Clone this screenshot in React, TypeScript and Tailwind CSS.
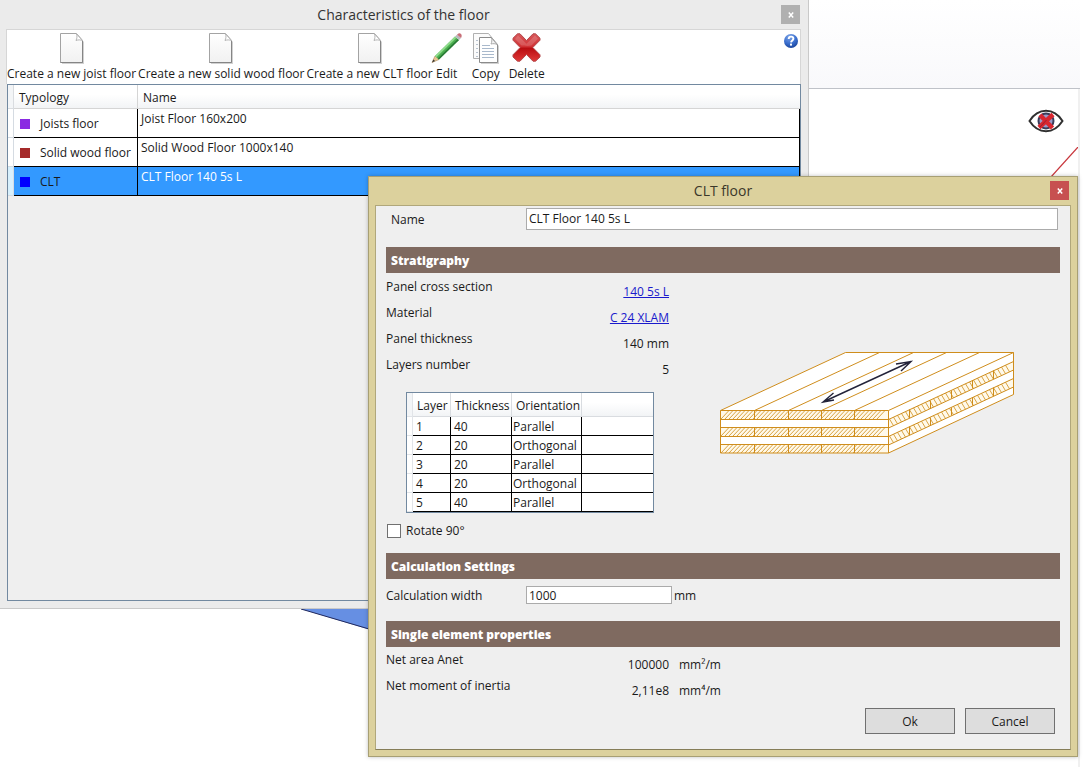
import React, { useState } from 'react';

interface FloorRow {
    typology: string;
    name: string;
    color: string;
}

const floors: FloorRow[] = [
    { typology: 'Joists floor', name: 'Joist Floor 160x200', color: 'bg-[#8a2be2]' },
    { typology: 'Solid wood floor', name: 'Solid Wood Floor 1000x140', color: 'bg-[#a52a2a]' },
    { typology: 'CLT', name: 'CLT Floor 140 5s L', color: 'bg-[#0000ff]' },
];

const layers = [
    { id: 1, thickness: 40, orientation: 'Parallel' },
    { id: 2, thickness: 20, orientation: 'Orthogonal' },
    { id: 3, thickness: 20, orientation: 'Parallel' },
    { id: 4, thickness: 20, orientation: 'Orthogonal' },
    { id: 5, thickness: 40, orientation: 'Parallel' },
];

const FileIcon = () => (
    <svg width="26" height="32" viewBox="0 0 26 32">
        <defs>
            <linearGradient id="paper" x1="0" y1="0" x2="0" y2="1">
                <stop offset="0" stopColor="#fff" />
                <stop offset="1" stopColor="#f1f1f1" />
            </linearGradient>
        </defs>
        <path d="M3 2h16l6 7v22H3z" fill="#000" opacity=".18" />
        <path d="M1.5.5h16l6 7v22h-22z" fill="url(#paper)" stroke="#a3a3a3" />
        <path d="M23.5 8v21.500h-22" fill="none" stroke="#858585" />
        <path d="M17.500 1c.8 2 .5 4.500-.5 6.500 2-.8 4.500-.8 6.500 0z" fill="#fff" stroke="#b5b5b5" />
    </svg>
);

const PencilIcon = () => (
    <svg width="32" height="32" viewBox="0 0 32 32">
        <path d="M1 29.500L4 23l4 3.500z" fill="#e8c592" stroke="#a88658" strokeWidth=".6" />
        <path d="M1 29.500l1.500-3 1.500 1.500z" fill="#333" />
        <path d="M4 23L24 3.500 28 7 8 26.500z" fill="#4caf50" />
        <path d="M4 23L24 3.500l1.400 1.200L5.400 24.200z" fill="#8fdc8c" />
        <path d="M6.800 25.500L26.700 6 28 7 8 26.500z" fill="#2a7a36" />
        <path d="M24 3.500l2-1.800 4 3.300L28 7z" fill="#b9b9bd" />
        <path d="M26 1.700C28 0 29 0 30 1s.8 2.500 0 4z" fill="#c86f78" />
    </svg>
);

const CopyIcon = () => (
    <svg width="28" height="32" viewBox="0 0 28 32">
        <path d="M1.500.5h15l4 5v20h-19z" fill="#fbfbfb" stroke="#b0b0b0" />
        <path d="M4 7.500h2M4 11.500h2M4 15.500h2M4 19.500h2M4 23.500h2" stroke="#b8c2cf" />
        <path d="M9 6h12l6 7v18H9z" fill="#000" opacity=".18" />
        <path d="M7.500 4.500h12l6 7v18h-18z" fill="#fff" stroke="#8b8b8b" />
        <path d="M19.500 5c.6 2 .4 4-.5 6 2-.6 4.500-.4 6 .5z" fill="#f4f4f4" stroke="#ababab" />
        <path d="M10 12.500h8M10 15.500h12M10 18.500h12M10 21.500h12M10 24.500h12" stroke="#a9b9cc" />
    </svg>
);

const DeleteIcon = () => (
    <svg width="30" height="32" viewBox="0 0 30 32">
        <defs>
            <linearGradient id="cross" x1="0" y1="0" x2="0" y2="1">
                <stop offset="0" stopColor="#d8585a" />
                <stop offset=".48" stopColor="#d03033" />
                <stop offset=".52" stopColor="#b80c10" />
                <stop offset="1" stopColor="#e03a38" />
            </linearGradient>
        </defs>
        <path
            d="M5.500.8h2.500L14.500 7.500 21 .8h2.500L28 5.200v2L20.800 14.500l7.200 7.300v2.200l-4.500 4.200H21L14.500 21.500 8 28.200H5.500L1 24v-2.200l7.200-7.300L1 7.200v-2z"
            fill="url(#cross)"
            stroke="#b3484b"
        />
        <path d="M6 2.500L14.500 10.800 23 2.500l3 3.300-6.500 6.700c-4 1-7.500 0-10 0L3 6z" fill="#fff" opacity=".16" />
    </svg>
);

const HelpIcon = () => (
    <svg width="16" height="16" viewBox="0 0 16 16">
        <defs>
            <radialGradient id="help" cx=".4" cy=".2" r=".8">
                <stop offset="0" stopColor="#7da4e6" />
                <stop offset=".6" stopColor="#3b6fce" />
                <stop offset="1" stopColor="#1b469d" />
            </radialGradient>
        </defs>
        <circle cx="8" cy="8" r="7" fill="url(#help)" />
        <path d="M5.700 6c0-1.600 1-2.400 2.400-2.400S10.400 4.500 10.400 5.800C10.400 7.300 8.200 7.500 8 9.400" fill="none" stroke="#fff" strokeWidth="1.900" />
        <rect x="7" y="10.600" width="2" height="2" fill="#fff" />
    </svg>
);

const HiddenEyeIcon = () => (
    <svg width="36" height="24" viewBox="0 0 36 24">
        <circle cx="18" cy="12" r="7.500" fill="#9a9ac8" stroke="#3a3c58" strokeWidth="2" />
        <path d="M1.500 12C6 5 11 1.800 18 1.800S30 5 34.500 12C30 19 25 22.200 18 22.200S6 19 1.500 12z" fill="none" stroke="#303030" strokeWidth="2" />
        <path d="M12 6l12.500 13M25 5.500L11 18.500" stroke="#d8262f" strokeWidth="4.500" />
        <path d="M18.500 11L12 18" stroke="#9c1c2c" />
    </svg>
);

const CloseGlyph = () => (
    <svg width="6" height="6" viewBox="0 0 6 6">
        <path d="M.8.500l4.400 5M5.200.500L.8 5.500" stroke="#fff" strokeWidth="1.500" />
    </svg>
);

// height of the receding edge at a given distance from the front corner
const drop = (dx: number) => (dx * 58) / 125;

// Axonometric view of the five-layer panel
const PanelDrawing = () => {
    const front = [58.5, 75.5, 92.5];
    const joints = [34.5, 68.5, 101.5, 134.5];
    const side = [67.5, 84.5];
    const frontHatch = Array.from({ length: 40 }, (_, i) => i * 4 + 1);
    const sideHatch = Array.from({ length: 30 }, (_, i) => i * 4 + 1);

    return (
        <svg width="296" height="103" viewBox="0 0 296 103" className="shrink-0">
            <path d="M.5 58.500L125.500.500h168v42L168.500 101H.500z" fill="#fff" />
            {front.map((y) => (
                <g key={y}>
                    <rect x="0.5" y={y} width="168" height="8.5" fill="#fff9ea" />
                    <path d={frontHatch.map((x) => `M${x} ${y + 8.5}l8-8.5`).join('')} stroke="#d49a30" strokeWidth=".9" />
                </g>
            ))}
            {side.map((y) => (
                <g key={y}>
                    <path d={`M168.500 ${y}l125-58v8.500l-125 58z`} fill="#fff9ea" />
                    <path
                        d={sideHatch.map((dx) => `M${168.5 + dx} ${y - drop(dx)}L${172.5 + dx} ${y + 8.5 - drop(dx + 4)}`).join('')}
                        stroke="#d49a30"
                        strokeWidth=".9"
                    />
                </g>
            ))}
            <g fill="none" stroke="#cf8d1c">
                <path d="M.5 58.500h168V101H.500zM.5 67.500h168M.5 75.500h168M.5 84.500h168M.5 92.500h168" />
                <path d="M.5 58.500L125.500.500h168v42L168.500 101M168.500 58.500l125-58" />
                {joints.map((x) => (
                    <path key={x} d={`M${x} 58.500l125-58M${x} 58.500v9M${x} 75.500v9M${x} 92.500v8.500`} />
                ))}
                {side.map((y) => (
                    <path
                        key={y}
                        d={`M168.500 ${y}l125-58M168.500 ${y + 8.5}l125-58M189.500 ${y - 10}v8.500M210.500 ${y - 19}v8M231.500 ${y - 29}v8M252.500 ${y - 39}v8M273.500 ${y - 49}v8.500`}
                    />
                ))}
            </g>
            <path d="M103 50L191 9.500M113.500 41L103 50l11-2M176 12l15-2.500-10 9.500" fill="none" stroke="#23233a" strokeWidth="1.400" />
        </svg>
    );
};

interface ToolButtonProps {
    label: string;
    width?: string;
    children: React.ReactNode;
}

const ToolButton: React.FC<ToolButtonProps> = ({ label, width = '', children }) => (
    <button className={`flex flex-col items-center gap-px whitespace-nowrap ${width}`}>
        {children}
        <span className="leading-4">{label}</span>
    </button>
);

const SectionBar = ({ title }: { title: string }) => (
    <h2 className="h-[26px] bg-[#7f6a60] pl-[5px] pt-px text-xs leading-[26px] font-extrabold text-white">{title}</h2>
);

interface PropertyProps {
    label: string;
    unit?: string;
    children: React.ReactNode;
}

const Property: React.FC<PropertyProps> = ({ label, unit, children }) => (
    <div className="grid h-[26px] grid-cols-[140px_143px_50px] whitespace-nowrap">
        <span className="leading-[26px]">{label}</span>
        <span className="pt-[10px] text-right leading-4">{children}</span>
        <span className="pt-[10px] pl-[10px] leading-4">{unit}</span>
    </div>
);

const FloorsWindow = () => (
    <section className="absolute top-0 right-[277px] bottom-[158px] left-0 flex flex-col border-r border-b border-[#c9c9c9] bg-[#ebebeb] pb-[7px] pr-[7px] pl-1.5">
        <header className="relative flex h-[29px] shrink-0 items-center justify-center">
            <h1 className="text-sm text-[#333]">Characteristics of the floor</h1>
            <button aria-label="Close" className="absolute top-[5px] right-px flex size-[19px] items-center justify-center bg-[#b0b0b0]">
                <CloseGlyph />
            </button>
        </header>

        {/* Toolbar */}
        <div className="flex h-[55px] shrink-0 items-start gap-0.5 border-x border-t border-[#d6d6d6] bg-white pt-[3px]">
            <ToolButton label="Create a new joist floor"><FileIcon /></ToolButton>
            <ToolButton label="Create a new solid wood floor"><FileIcon /></ToolButton>
            <ToolButton label="Create a new CLT floor"><FileIcon /></ToolButton>
            <ToolButton label="Edit" width="w-6"><PencilIcon /></ToolButton>
            <ToolButton label="Copy" width="w-[50px]"><CopyIcon /></ToolButton>
            <ToolButton label="Delete" width="w-7"><DeleteIcon /></ToolButton>
            <button aria-label="Help" className="mr-px ml-auto"><HelpIcon /></button>
        </div>

        {/* Floor list */}
        <div className="ml-px flex-1 border border-[#7289a0] bg-[#efefef]">
            <table className="w-full table-fixed border-separate border-spacing-0">
                <colgroup>
                    <col className="w-1.5" />
                    <col className="w-[124px]" />
                    <col />
                </colgroup>
                <thead>
                    <tr className="h-6 bg-linear-to-b from-white from-40% to-[#f1f3f5] text-left">
                        <th className="border-r border-b border-[#d9dce0] bg-[#f3f5f7] p-0" />
                        <th className="border-r border-b border-[#d5d5d5] p-0 pt-0.5 pl-[5px] font-normal">Typology</th>
                        <th className="border-b border-[#d5d5d5] p-0 pt-0.5 pl-[5px] font-normal">Name</th>
                    </tr>
                </thead>
                <tbody>
                    {floors.map((floor) => {
                        const selected = floor.typology === 'CLT';
                        return (
                            <tr key={floor.name} className={`h-[29px] ${selected ? 'bg-[#3399ff]' : 'bg-white'}`}>
                                <td className={`border-r border-b border-[#d5dbe2] p-0 ${selected ? 'bg-[#d8f0fc]' : 'bg-white'}`} />
                                <td className="border-r border-b border-black p-0 pl-1.5">
                                    <div className="flex items-center gap-2.5 pt-0.5">
                                        <span className={`size-2.5 ${floor.color}`} />
                                        {floor.typology}
                                    </div>
                                </td>
                                <td className={`border-r border-b border-black p-0 pt-0.5 pl-[3px] align-top leading-4 ${selected ? 'text-white' : ''}`}>
                                    {floor.name}
                                </td>
                            </tr>
                        );
                    })}
                </tbody>
            </table>
        </div>
    </section>
);

const LayersTable = () => (
    <table className="mt-3.5 ml-5 w-[248px] table-fixed border-separate border-spacing-0 border border-[#7289a0] bg-white">
        <colgroup>
            <col className="w-1.5" />
            <col className="w-[38px]" />
            <col className="w-[61px]" />
            <col className="w-[70px]" />
            <col />
        </colgroup>
        <thead>
            <tr className="h-6 bg-linear-to-b from-white from-40% to-[#f1f3f5] text-left">
                <th className="border-r border-b border-[#e1e4e8] bg-[#f3f5f7] p-0" />
                <th className="border-r border-b border-[#d9dce0] p-0 pt-0.5 pl-1 font-normal">Layer</th>
                <th className="border-r border-b border-[#d9dce0] p-0 pt-0.5 pl-1 font-normal">Thickness</th>
                <th className="border-r border-b border-[#d9dce0] p-0 pt-0.5 pl-1 font-normal">Orientation</th>
                <th className="border-b border-[#d9dce0] p-0" />
            </tr>
        </thead>
        <tbody>
            {layers.map((layer) => (
                <tr key={layer.id} className="h-[19px] leading-4">
                    <td className="border-r border-b border-[#e1e4e8] p-0" />
                    <td className="border-r border-b border-black p-0 pt-0.5 pl-[3px]">{layer.id}</td>
                    <td className="border-r border-b border-black p-0 pt-0.5 pl-[3px]">{layer.thickness}</td>
                    <td className="border-r border-b border-black p-0 pt-0.5 pl-px">{layer.orientation}</td>
                    <td className="border-b border-black p-0" />
                </tr>
            ))}
        </tbody>
    </table>
);

const CltDialog = () => {
    const [name, setName] = useState('CLT Floor 140 5s L');
    const [width, setWidth] = useState('1000');
    const [rotated, setRotated] = useState(false);

    return (
        <section role="dialog" aria-label="CLT floor" className="absolute top-[176px] right-2 left-[368px] border border-[#a79f74] bg-[#dcd19d] px-1.5 pb-1.5 shadow-[0_0_4px_rgba(0,0,0,0.25)]">
            <header className="relative flex h-7 items-center justify-center">
                <h1 className="text-sm text-[#3b382a]">CLT floor</h1>
                <button aria-label="Close" className="absolute top-1 right-0.5 flex size-[19px] items-center justify-center bg-[#c75050]">
                    <CloseGlyph />
                </button>
            </header>

            <div className="border border-[#b0a77b] border-b-[#857d58] bg-[#efefef] pt-0.5 pr-[10px] pb-[15px] pl-[10px]">
                <div className="grid grid-cols-[140px_1fr] items-center">
                    <label htmlFor="floor-name" className="pt-0.5 pl-[5px]">Name</label>
                    <input
                        id="floor-name"
                        value={name}
                        onChange={(e) => setName(e.target.value)}
                        className="mr-0.5 h-[22px] border border-[#ababab] bg-white pb-0.5 pl-0.5 outline-none"
                    />
                </div>

                <div className="mt-[17px]">
                    <SectionBar title="Stratigraphy" />
                    <div className="flex justify-between pt-px">
                        <div>
                            <Property label="Panel cross section"><a href="#section" className="text-[#1a1acc] underline">140 5s L</a></Property>
                            <Property label="Material"><a href="#material" className="text-[#1a1acc] underline">C 24 XLAM</a></Property>
                            <Property label="Panel thickness">140 mm</Property>
                            <Property label="Layers number">5</Property>
                            <LayersTable />
                        </div>
                        <div className="pt-[78px] pr-11">
                            <PanelDrawing />
                        </div>
                    </div>
                    <label className="mt-2 flex h-5 items-center gap-[5px] pl-px">
                        <input
                            type="checkbox"
                            checked={rotated}
                            onChange={(e) => setRotated(e.target.checked)}
                            className="size-3.5 appearance-none border border-[#707070] bg-white checked:bg-[#3399ff]"
                        />
                        Rotate 90°
                    </label>
                </div>

                <div className="mt-3">
                    <SectionBar title="Calculation Settings" />
                    <div className="grid grid-cols-[140px_146px_1fr] items-center pt-[7px]">
                        <label htmlFor="calc-width" className="pt-0.5">Calculation width</label>
                        <input
                            id="calc-width"
                            value={width}
                            onChange={(e) => setWidth(e.target.value)}
                            className="h-[18px] border border-[#ababab] bg-white pl-0.5 outline-none"
                        />
                        <span className="pt-0.5 pl-0.5">mm</span>
                    </div>
                </div>

                <div className="mt-[17px]">
                    <SectionBar title="Single element properties" />
                    <Property label="Net area Anet" unit="mm²/m">100000</Property>
                    <Property label="Net moment of inertia" unit="mm⁴/m">2,11e8</Property>
                </div>

                <div className="mt-[9px] flex justify-end gap-2.5 pr-[5px]">
                    <button className="h-[26px] w-[90px] border border-[#707070] bg-[#dddddd] pt-px">Ok</button>
                    <button className="h-[26px] w-[90px] border border-[#707070] bg-[#dddddd] pt-px">Cancel</button>
                </div>
            </div>
        </section>
    );
};

const App: React.FC = () => (
    <main className="relative h-screen overflow-hidden bg-white font-['Open_Sans',sans-serif] text-xs text-[#1a1a1a]">
        {/* 3D view behind the windows */}
        <div className="mr-1.5 flex h-full flex-col">
            <div className="h-[89px] border-b border-[#bfc2c8] bg-linear-to-b from-white to-[#f9f9fb]" />
            <div className="relative flex-1 border-r-2 border-[#f0f0f0]">
                <button aria-label="Hide objects" className="absolute top-5 right-3.5"><HiddenEyeIcon /></button>
                <svg width="27" height="30" viewBox="0 0 27 30" className="absolute top-[58px] right-0">
                    <path d="M27 0L0 30" stroke="#c8363c" strokeWidth="1.200" />
                </svg>
                <svg width="68" height="21" viewBox="0 0 68 21" className="absolute top-[520px] left-[301px]">
                    <path d="M0 0h68v20.500z" fill="#668fe3" />
                    <path d="M0 0l68 20" stroke="#20285c" />
                </svg>
            </div>
        </div>

        <FloorsWindow />
        <CltDialog />
    </main>
);

export default App;
